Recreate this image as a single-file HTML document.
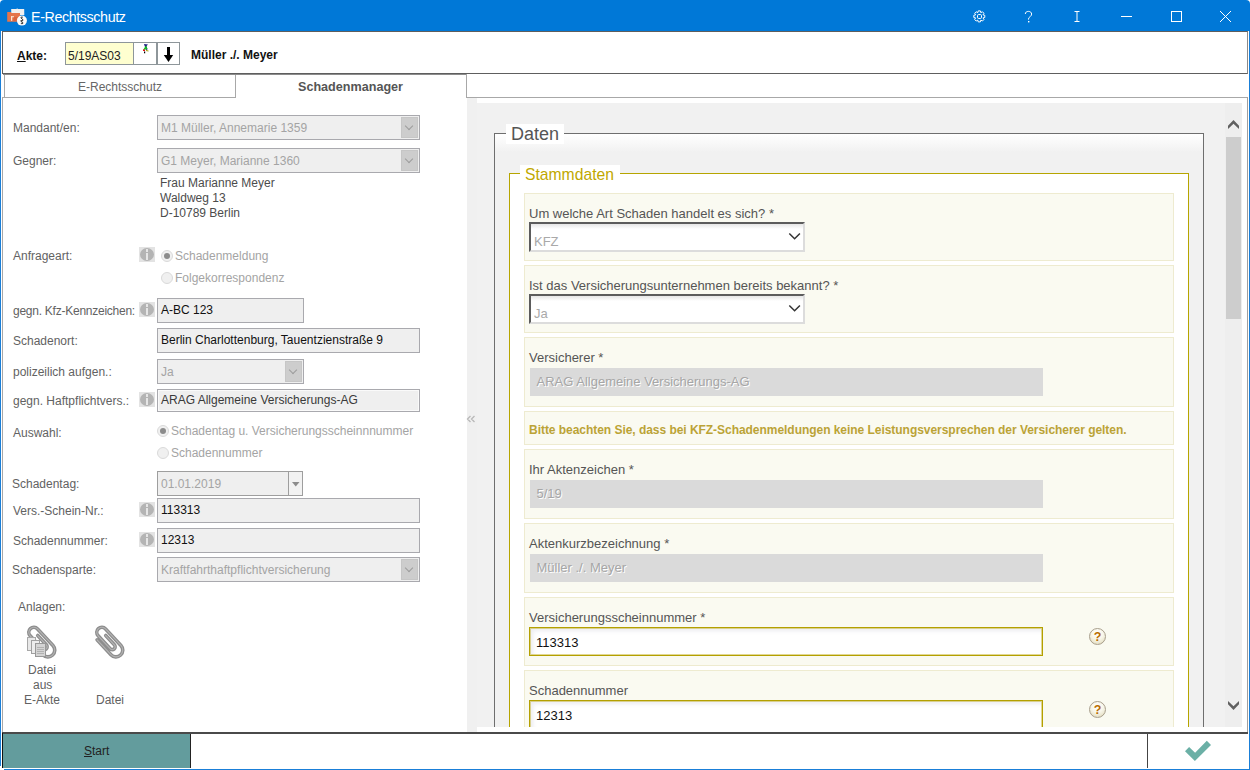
<!DOCTYPE html>
<html><head><meta charset="utf-8">
<style>
*{box-sizing:border-box;margin:0;padding:0}
html,body{width:1250px;height:770px;overflow:hidden;background:#fff;font-family:"Liberation Sans",sans-serif;position:relative}
.a{position:absolute}
.t{position:absolute;white-space:nowrap;line-height:1}
/* title */
#title{left:0;top:0;width:1250px;height:31px;background:#0078d7}
.lbl{position:absolute;white-space:nowrap;font-size:12px;color:#626262;line-height:14px}
.inp{position:absolute;border:1px solid #a9a9ae;background:#efefef;height:25px;font-size:12px;line-height:22px;padding-left:3px;white-space:nowrap;overflow:hidden}
.dis{color:#a4a4a4}
.inp.dis{line-height:24px}
.dd{position:absolute;top:1px;right:1px;width:17px;height:21px;background:#cdcdcd;border:1px solid #c6c6c6}
.dd:after{content:"";position:absolute;left:4px;top:5px;width:5px;height:5px;border-right:1px solid #9c9c9c;border-bottom:1px solid #9c9c9c;transform:rotate(45deg)}
.info{position:absolute;width:16px;height:15px;background:#e3e3e3}
.info:after{content:"";position:absolute;left:1px;top:1px;width:14px;height:13px;border-radius:50%;background:#b4b4b4}
.info i{position:absolute;left:6.5px;top:6px;width:2.5px;height:7px;background:#e6e6e6;z-index:2}
.info b{position:absolute;left:6.5px;top:2px;width:2.5px;height:2.8px;background:#e6e6e6;z-index:2}
.radio{position:absolute;width:12px;height:12px;border-radius:50%;border:1px solid #dadada;background:#f0f0f0}
.radio.on:after{content:"";position:absolute;left:2px;top:2px;width:6px;height:6px;border-radius:50%;background:#8c8c8c}
/* right */
.item{position:absolute;left:47px;width:650px;background:#fafaf1;border:1px solid #eeebd0}
.rl{position:absolute;left:4px;font-size:13px;color:#555;white-space:nowrap;line-height:15px}
.sel{position:absolute;left:5px;width:276px;height:30px;background:linear-gradient(#e6e6e6,#fff 5px);border-top:2px solid #5c5c5c;border-left:2px solid #5c5c5c;border-right:2px solid #dcdcdc;border-bottom:2px solid #dcdcdc;font-size:13px;color:#a9a9a9;padding-left:3px;line-height:35px}
.gin{position:absolute;left:5px;width:513px;height:28px;background:#dadada;font-size:13px;color:#a6a6a6;padding-left:6.5px;line-height:28px;text-shadow:1px 1px 0 #fff}
.yin{position:absolute;left:4px;width:514px;height:29px;background:#fff;border:1px solid #b4a000;box-shadow:inset 0 0 0 1px rgba(190,170,20,.45),inset 3px 3px 4px rgba(40,40,90,.09);font-size:13px;color:#111;padding-left:6px;line-height:29px}
.chev{position:absolute;left:257px;top:8px}
.q{position:absolute;width:17px;height:17px;border-radius:50%;background:radial-gradient(circle at 50% 30%,#fff 0,#f8f6ea 45%,#ddd6b4 100%);border:1px solid #a89e8c;font-size:12.5px;font-weight:bold;color:#b86c00;text-align:center;line-height:16px}
</style></head><body>

<!-- window title -->
<div id="title" class="a" style="border-radius:4px 4px 0 0"></div>
<div class="t" style="left:31px;top:10px;font-size:14.3px;letter-spacing:-0.4px;color:#fff">E-Rechtsschutz</div>
<svg class="a" style="left:4px;top:4px" width="26" height="26" viewBox="4 4 26 26">
  <path d="M11.2 9 L16.5 9 L17 8.3 L18 9 L24.2 9 L24.3 15 L11.2 15 Z" fill="#f0f0f0"/>
  <path d="M7.2 12.1 L10.8 12.1 L11.4 13 L20 13 L20 21.7 L7.2 21.7 Z" fill="#e5744a"/>
  <rect x="11" y="16.2" width="1.2" height="4.6" fill="#fbe3d2"/><rect x="11" y="16.2" width="3" height="1.1" fill="#fbe3d2"/>
  <rect x="13.5" y="17.5" width="4" height="1" fill="#d05030"/><rect x="13.5" y="19.5" width="4" height="1" fill="#d05030"/>
  <circle cx="21.9" cy="20.6" r="5" fill="#fafafa"/>
  <path d="M22.8 17.4 C22.4 16.8 20.9 16.9 21 17.8 C21.1 18.7 23 18.9 22.9 20.1 C22.8 21.2 21 21.1 20.9 20.2 M21.1 20.6 C20.7 21.3 21.4 22 22.2 22.2 C23.2 22.5 23.1 23.7 22 23.8 C21.5 23.8 21.1 23.5 21 23.2" fill="none" stroke="#111" stroke-width="1"/>
</svg>
<svg class="a" style="left:960px;top:0" width="290" height="31" viewBox="960 0 290 31">
  <g fill="none" stroke="#fff" stroke-width="1">
    <path d="M977.74 12.72 L978.23 10.90 L980.37 10.90 L980.86 12.72 L980.80 12.69 L982.43 11.76 L983.94 13.27 L983.01 14.90 L982.98 14.84 L984.80 15.33 L984.80 17.47 L982.98 17.96 L983.01 17.90 L983.94 19.53 L982.43 21.04 L980.80 20.11 L980.86 20.08 L980.37 21.90 L978.23 21.90 L977.74 20.08 L977.80 20.11 L976.17 21.04 L974.66 19.53 L975.59 17.90 L975.62 17.96 L973.80 17.47 L973.80 15.33 L975.62 14.84 L975.59 14.90 L974.66 13.27 L976.17 11.76 L977.80 12.69 Z"/>
    <rect x="977.5" y="14.5" width="4" height="4" rx="1.2"/>
    <path d="M1025.3 14 c0 -1.8 1.4 -2.6 3.2 -2.6 c1.8 0 3.1 1.1 3.1 2.6 c0 1.5 -0.8 2.1 -1.7 2.8 c-0.9 0.7 -1.4 1.2 -1.4 2.4 v0.5"/>
    <path d="M1074.5 11.5 h5 M1077 11.5 v10 M1074.5 21.5 h5"/>
    <path d="M1121 16.5 h11"/>
    <rect x="1171.5" y="11.5" width="10" height="10"/>
    <path d="M1220 11 L1231 22 M1231 11 L1220 22"/>
  </g>
  <rect x="1028" y="21" width="1.4" height="1.4" fill="#fff"/>
</svg>

<!-- frame borders -->
<div class="a" style="left:0;top:31px;width:1px;height:735px;background:#1a7fd8"></div>
<div class="a" style="left:1249px;top:31px;width:1px;height:739px;background:#1a7fd8"></div>
<div class="a" style="left:4px;top:769px;width:1246px;height:1px;background:#1a7fd8"></div>

<!-- toolbar -->
<div class="a" style="left:2px;top:31px;width:1246px;height:43px;border:1px solid #5e5e5e;border-right-color:#8a8a8a"></div>
<div class="t" style="left:17px;top:50px;font-size:12px;font-weight:bold;color:#111"><u>A</u>kte:</div>
<div class="a" style="left:65px;top:42px;width:69px;height:23px;border:1px solid #8e969a;background:#ffffd0"></div>
<div class="t" style="left:68px;top:49.5px;font-size:12px;color:#222">5/19AS03</div>
<div class="a" style="left:133px;top:42px;width:24px;height:23px;border:1px solid #8e969a;background:#fff"></div>
<div class="a" style="left:157px;top:42px;width:23px;height:23px;border:1px solid #8e969a;background:#fff"></div>
<div class="t" style="left:191px;top:49px;font-size:12px;font-weight:bold;color:#111">Müller ./. Meyer</div>
<svg class="a" style="left:133px;top:42px" width="48" height="23" viewBox="133 42 48 23">
  <path d="M144 44 L148 44.5 L146.5 46 L147.5 49.5 L146 50 Z" fill="#1a1a80"/>
  <path d="M143 50 L146 45.5 L147.5 49 Z" fill="#10c020"/>
  <rect x="143" y="49.5" width="2" height="1.5" fill="#e01010"/>
  <path d="M146 50.5 L148.5 51" stroke="#a0a000" stroke-width="1"/>
  <rect x="144" y="51.5" width="1.2" height="1.8" fill="#000"/>
  <rect x="167" y="47" width="3" height="9" fill="#000"/>
  <path d="M163.8 55 L173.2 55 L168.5 62 Z" fill="#000"/>
</svg>

<!-- tabs -->
<div class="a" style="left:4px;top:74px;width:232px;height:24px;border:1px solid #a8a8a8;border-bottom:none"></div>
<div class="a" style="left:3px;top:74px;width:463px;height:1px;background:#8c8c8c"></div>
<div class="t" style="left:78px;top:81px;font-size:12px;color:#666">E-Rechtsschutz</div>
<div class="t" style="left:298px;top:81px;font-size:12.6px;font-weight:bold;color:#555">Schadenmanager</div>
<div class="a" style="left:466px;top:74px;width:782px;height:24px;border-left:1px solid #a8a8a8;border-bottom:1px solid #a8a8a8"></div>
<div class="a" style="left:2px;top:97px;width:234px;height:1px;background:#a8a8a8"></div>
<div class="a" style="left:2px;top:97px;width:1px;height:636px;background:#a8a8a8"></div>
<div class="a" style="left:1247px;top:97px;width:1px;height:636px;background:#a0a0a0"></div>

<!-- collapse strip -->
<div class="a" style="left:467px;top:98px;width:10px;height:635px;background:#f0f0f0"></div>
<svg class="a" style="left:466px;top:415px" width="11" height="8"><path d="M4.5 1 L1.5 4 L4.5 7 M8.5 1 L5.5 4 L8.5 7" fill="none" stroke="#b8b8b8" stroke-width="1.3"/></svg>

<!-- LEFT PANEL -->
<div class="lbl" style="left:13px;top:121px">Mandant/en:</div>
<div class="inp dis" style="left:157px;top:115px;width:263px">M1 Müller, Annemarie 1359<div class="dd"></div></div>
<div class="lbl" style="left:13px;top:154px">Gegner:</div>
<div class="inp dis" style="left:157px;top:148px;width:263px">G1 Meyer, Marianne 1360<div class="dd"></div></div>
<div class="lbl" style="left:160px;top:176px;color:#4c4c4c">Frau Marianne Meyer</div>
<div class="lbl" style="left:160px;top:191px;color:#4c4c4c">Waldweg 13</div>
<div class="lbl" style="left:160px;top:206px;color:#4c4c4c">D-10789 Berlin</div>

<div class="lbl" style="left:13px;top:249px">Anfrageart:</div>
<div class="info" style="left:139px;top:247px"><i></i><b></b></div>
<div class="radio on" style="left:161px;top:250px"></div>
<div class="lbl dis" style="left:175px;top:249px">Schadenmeldung</div>
<div class="radio" style="left:161px;top:272px"></div>
<div class="lbl dis" style="left:175px;top:271px">Folgekorrespondenz</div>

<div class="lbl" style="left:13px;top:304px;letter-spacing:-0.25px">gegn. Kfz-Kennzeichen:</div>
<div class="info" style="left:139px;top:302px"><i></i><b></b></div>
<div class="inp" style="left:157px;top:298px;width:147px;color:#111">A-BC 123</div>

<div class="lbl" style="left:13px;top:334px">Schadenort:</div>
<div class="inp" style="left:157px;top:328px;width:263px;color:#111">Berlin Charlottenburg, Tauentzienstraße 9</div>

<div class="lbl" style="left:13px;top:365px">polizeilich aufgen.:</div>
<div class="inp dis" style="left:157px;top:359px;width:147px">Ja<div class="dd"></div></div>

<div class="lbl" style="left:13px;top:394px">gegn. Haftpflichtvers.:</div>
<div class="info" style="left:139px;top:392px"><i></i><b></b></div>
<div class="inp" style="left:157px;top:389px;width:263px;height:23px;line-height:20px;color:#3a3a3a;box-shadow:inset 0 0 0 1px #fafafa">ARAG Allgemeine Versicherungs-AG</div>

<div class="lbl" style="left:13px;top:426px">Auswahl:</div>
<div class="radio on" style="left:157px;top:425px"></div>
<div class="lbl dis" style="left:171px;top:424px">Schadentag u. Versicherungsscheinnnummer</div>
<div class="radio" style="left:157px;top:447px"></div>
<div class="lbl dis" style="left:171px;top:446px">Schadennummer</div>

<div class="lbl" style="left:12px;top:477px">Schadentag:</div>
<div class="inp dis" style="left:157px;top:471px;width:146px;border-color:#9e9e9e">01.01.2019<div class="a" style="left:130px;top:0;width:1px;height:23px;background:#9e9e9e"></div><div class="a" style="left:131px;top:0;width:14px;height:23px;background:#f2f2f2"></div><svg class="a" style="left:134px;top:10px" width="8" height="5"><path d="M0 0 H7.5 L3.75 4.5 Z" fill="#8c8c8c"/></svg></div>

<div class="lbl" style="left:13px;top:504px">Vers.-Schein-Nr.:</div>
<div class="info" style="left:139px;top:502px"><i></i><b></b></div>
<div class="inp" style="left:157px;top:498px;width:263px;color:#111">113313</div>

<div class="lbl" style="left:13px;top:534px">Schadennummer:</div>
<div class="info" style="left:139px;top:532px"><i></i><b></b></div>
<div class="inp" style="left:157px;top:528px;width:263px;color:#111">12313</div>

<div class="lbl" style="left:12px;top:563px">Schadensparte:</div>
<div class="inp dis" style="left:157px;top:557px;width:263px">Kraftfahrthaftpflichtversicherung<div class="dd"></div></div>

<div class="lbl" style="left:18px;top:600px">Anlagen:</div>
<svg class="a" style="left:88px;top:620px" width="45" height="45" viewBox="0 0 45 45">
 <g transform="translate(21.2,22.8) rotate(-43) scale(1.1)" fill="none" stroke-linecap="round">
  <path d="M-6.2 -9.5 L-6.2 9 A6.2 6.2 0 0 0 6.2 9 L6.2 -11.5 A4.6 4.6 0 0 0 -3 -11.5 L-3 4.5 A2.6 2.6 0 0 0 2.2 4.5 L2.2 -7" stroke="#8e8e8e" stroke-width="3.3"/>
  <path d="M-6.2 -9.5 L-6.2 9 A6.2 6.2 0 0 0 6.2 9 L6.2 -11.5 A4.6 4.6 0 0 0 -3 -11.5 L-3 4.5 A2.6 2.6 0 0 0 2.2 4.5 L2.2 -7" stroke="#b4b4b4" stroke-width="1"/>
 </g>
</svg>
<svg class="a" style="left:20px;top:620px" width="50" height="45" viewBox="0 0 50 45">
 <g transform="translate(21.2,22.8) rotate(-43) scale(1.1)" fill="none" stroke-linecap="round">
  <path d="M-6.2 -9.5 L-6.2 9 A6.2 6.2 0 0 0 6.2 9 L6.2 -11.5 A4.6 4.6 0 0 0 -3 -11.5 L-3 4.5 A2.6 2.6 0 0 0 2.2 4.5 L2.2 -7" stroke="#8e8e8e" stroke-width="3.3"/>
  <path d="M-6.2 -9.5 L-6.2 9 A6.2 6.2 0 0 0 6.2 9 L6.2 -11.5 A4.6 4.6 0 0 0 -3 -11.5 L-3 4.5 A2.6 2.6 0 0 0 2.2 4.5 L2.2 -7" stroke="#b4b4b4" stroke-width="1"/>
 </g>
 <rect x="7.5" y="17.5" width="8" height="13" fill="#e8e8e8" stroke="#a8a8a8"/>
 <rect x="11.5" y="20.5" width="8" height="13" fill="#ececec" stroke="#a0a0a0"/>
 <rect x="15.5" y="23.5" width="10" height="13" fill="#d4d4d4" stroke="#989898"/>
 <path d="M17 27.5 h7 M17 29.5 h7 M17 31.5 h7 M17 33.5 h7" stroke="#aaa" stroke-width="0.8"/>
</svg>
<div class="lbl" style="left:28px;top:663px">Datei</div>
<div class="lbl" style="left:33px;top:678px">aus</div>
<div class="lbl" style="left:24px;top:693px">E-Akte</div>
<div class="lbl" style="left:96px;top:693px">Datei</div>

<!-- RIGHT PANEL -->
<div class="a" style="left:477px;top:103px;width:765px;height:624px;background:#f1f1f1;overflow:hidden">
</div>
<div class="a" id="rp" style="left:477px;top:103px;width:765px;height:624px;overflow:hidden">
  <!-- Daten fieldset -->
  <div class="a" style="left:17px;top:30px;width:710px;height:620px;border:1px solid #6e6e6e;background:linear-gradient(#fff 0,#f1f1f1 18px)"></div>
  <div class="a" style="left:29px;top:21px;width:58px;height:20px;background:#fff"></div>
  <div class="t" style="left:34px;top:22px;font-size:18px;color:#555">Daten</div>
  <!-- Stammdaten -->
  <div class="a" style="left:32px;top:70px;width:680px;height:600px;border:1px solid #b6a500;background:#fff"></div>
  <div class="a" style="left:43px;top:62px;width:100px;height:20px;background:#fff"></div>
  <div class="t" style="left:48px;top:63.5px;font-size:15.7px;color:#bfa800">Stammdaten</div>

  <div class="item" style="top:90px;height:68px">
    <div class="rl" style="top:12px">Um welche Art Schaden handelt es sich? *</div>
    <div class="sel" style="left:4px;top:28px">KFZ<svg class="chev" width="14" height="10"><path d="M1.3 1.5 L6.6 6.8 L11.9 1.5" fill="none" stroke="#333" stroke-width="1.5"/></svg></div>
  </div>
  <div class="item" style="top:162px;height:68px">
    <div class="rl" style="top:12px">Ist das Versicherungsunternehmen bereits bekannt? *</div>
    <div class="sel" style="left:4px;top:28px">Ja<svg class="chev" width="14" height="10"><path d="M1.3 1.5 L6.6 6.8 L11.9 1.5" fill="none" stroke="#333" stroke-width="1.5"/></svg></div>
  </div>
  <div class="item" style="top:234px;height:70px">
    <div class="rl" style="top:12px">Versicherer *</div>
    <div class="gin" style="top:30px">ARAG Allgemeine Versicherungs-AG</div>
  </div>
  <div class="item" style="top:308px;height:34px">
    <div class="rl" style="top:11px;font-weight:bold;color:#bba336;font-size:12px;letter-spacing:-0.04px">Bitte beachten Sie, dass bei KFZ-Schadenmeldungen keine Leistungsversprechen der Versicherer gelten.</div>
  </div>
  <div class="item" style="top:346px;height:70px">
    <div class="rl" style="top:12px">Ihr Aktenzeichen *</div>
    <div class="gin" style="top:30px">5/19</div>
  </div>
  <div class="item" style="top:420px;height:70px">
    <div class="rl" style="top:12px">Aktenkurzbezeichnung *</div>
    <div class="gin" style="top:30px">Müller ./. Meyer</div>
  </div>
  <div class="item" style="top:494px;height:69px">
    <div class="rl" style="top:12px">Versicherungsscheinnummer *</div>
    <div class="yin" style="top:29px">113313</div>
    <div class="q" style="left:564px;top:30px">?</div>
  </div>
  <div class="item" style="top:567px;height:80px">
    <div class="rl" style="top:12px">Schadennummer</div>
    <div class="yin" style="top:29px">12313</div>
    <div class="q" style="left:564px;top:30px">?</div>
  </div>
  <div class="a" style="left:748px;top:0;width:17px;height:624px;background:#eeeeee"></div>
  <div class="a" style="left:749px;top:34px;width:15px;height:182px;background:#cdcdcd"></div>
  <svg class="a" style="left:749px;top:14px" width="16" height="16"><polygon points="2,8.7 7.5,3 13,8.7 13,12 7.5,6.7 2,12" fill="#606060"/></svg>
  <svg class="a" style="left:749px;top:594px" width="16" height="16"><polygon points="2,4 7.5,9.3 13,4 13,7.3 7.5,13 2,7.3" fill="#606060"/></svg>
</div>

<!-- bottom bar -->
<div class="a" style="left:2px;top:732px;width:1246px;height:2px;background:#4a4a4a"></div>
<div class="a" style="left:3px;top:734px;width:187px;height:34px;background:#639c9d"></div>
<div class="a" style="left:2px;top:733px;width:1px;height:35px;background:#111"></div>
<div class="a" style="left:190px;top:734px;width:1px;height:34px;background:#222"></div>
<div class="t" style="left:84px;top:745px;font-size:12px;color:#222"><u>S</u>tart</div>
<div class="a" style="left:1147px;top:734px;width:1px;height:34px;background:#444"></div>
<svg class="a" style="left:0;top:0" width="1250" height="770"><polygon points="1189.1,747.1 1195.1,752.7 1206.8,740.8 1211,745.1 1194.9,761 1185,751.3" fill="#6bb0a6"/></svg>

</body></html>
